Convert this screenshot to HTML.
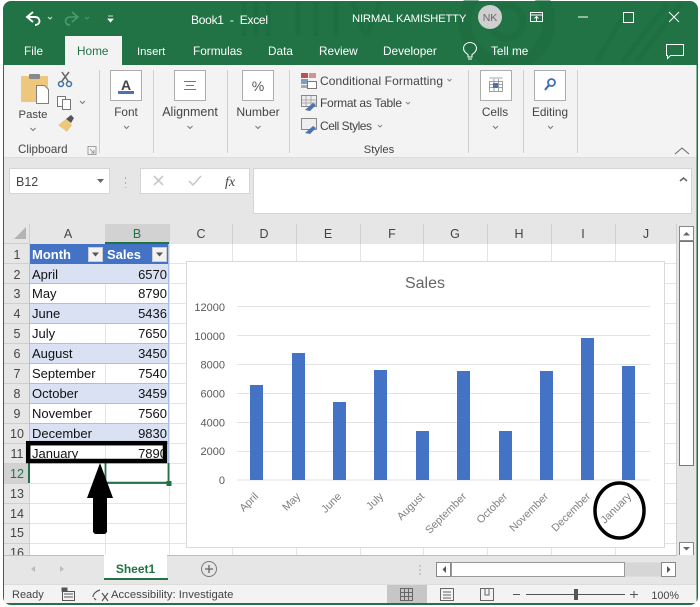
<!DOCTYPE html>
<html><head><meta charset="utf-8"><style>
html,body{margin:0;padding:0;background:#fff;width:700px;height:607px;overflow:hidden}
svg{display:block;font-family:"Liberation Sans",sans-serif}
</style></head><body>
<svg width="700" height="607" viewBox="0 0 700 607" xmlns="http://www.w3.org/2000/svg">
<rect width="700" height="607" fill="#fff"/>
<!-- window -->
<rect x="3" y="1" width="695" height="604" rx="8" fill="#217346"/>
<rect x="4" y="65" width="692.500" height="538" rx="4" fill="#e6e6e6"/>
<!-- title pattern -->
<g fill="none" stroke="#1c6a3e" opacity=".55">
<circle cx="507" cy="22" r="42" stroke-width="13"/>
<circle cx="507" cy="22" r="16" stroke-width="7"/>
<path d="M244 2v34M256 2v34M268 2v34M298 2v34M316 2v34M336 2v34M352 2l14 34M380 2l-14 34M622 62l45-58M636 62l45-58M596 62l30-50" stroke-width="5"/>
</g>
<!-- title bar -->
<g fill="none" stroke="#fff" stroke-width="1.900">
<path d="M33 12l-6 5 6 5M27 17h8c6 0 6 8 0 8"/>
</g>
<path d="M48 17l2 2 2-2" fill="none" stroke="#cfe3d7"/>
<g fill="none" stroke="#4d9a71" stroke-width="1.600"><path d="M72 12l6 5-6 5M78 17h-8c-6 0-6 8 0 8"/></g>
<path d="M85 17l2 2 2-2" fill="none" stroke="#4d9a71"/>
<path d="M108 16h5M108 19h5l-2.500 3z" fill="#fff" stroke="#fff" stroke-width=".8"/>
<text x="191" y="24" font-size="12" fill="#fff" xml:space="preserve" textLength="77">Book1  -  Excel</text>
<text x="352" y="22" font-size="11.300" fill="#fff" letter-spacing="-.2">NIRMAL KAMISHETTY</text>
<circle cx="490" cy="17" r="12" fill="#cfcfcf"/>
<text x="490" y="21" font-size="10.500" fill="#666" text-anchor="middle">NK</text>
<g fill="none" stroke="#fff" stroke-width="1">
<rect x="530.500" y="12.500" width="12" height="9"/><path d="M530.500 15h12M536.500 21v-4M534.500 18.500l2-2 2 2"/>
<path d="M578 17h10"/>
<rect x="623.500" y="12.500" width="10" height="10"/>
<path d="M669 12l10 10M679 12l-10 10"/>
<path d="M666.500 44.500h17v11h-13l-3 3v-3h-1z" stroke-width="1"/>
</g>
<!-- tabs -->
<rect x="65" y="36" width="57" height="30" fill="#f3f3f3"/>
<g font-size="11.800" fill="#fff">
<text x="24" y="55">File</text>
<text x="137" y="55" font-size="11.300">Insert</text>
<text x="193" y="55">Formulas</text>
<text x="268" y="55">Data</text>
<text x="319" y="55">Review</text>
<text x="383" y="55">Developer</text>
<text x="491" y="55">Tell me</text>
</g>
<text x="77" y="55" font-size="11.800" fill="#217346">Home</text>
<g fill="none" stroke="#fff" stroke-width="1"><path d="M468 57v-2.500c-8-5-4-12 2-12s10 7 2 12v2.500zM468 59h4"/></g>
<!-- ribbon -->
<rect x="4" y="65" width="692.500" height="92" fill="#f3f3f3"/>
<rect x="4" y="157" width="692.500" height="1" fill="#dcdcdc"/>
<!-- separators -->
<g stroke="#cfcfcf"><path d="M99.500 70v83M153.500 70v83M227.500 70v83M289.500 70v83M468.500 70v83M523.500 70v83M577.500 70v83"/></g>
<!-- clipboard -->
<rect x="21" y="76" width="27" height="26" rx="1" fill="#eec77f"/>
<rect x="29" y="74" width="11" height="5" rx="1" fill="#8a8a8a"/>
<path d="M36.500 85.500h8l4 4v14h-12z" fill="#fff" stroke="#7f7f7f"/>
<path d="M62 81l7-9M68 81l-6-9" stroke="#666" stroke-width="1.500" fill="none"/>
<g fill="none" stroke="#41719c" stroke-width="1.500"><circle cx="61" cy="84" r="2.500"/><circle cx="69" cy="84" r="2.500"/></g>
<g fill="#fff" stroke="#777"><rect x="57.500" y="96.500" width="8" height="10"/><rect x="62.500" y="99.500" width="8" height="10"/></g>
<path d="M80 101l2.500 2.500 2.500-2.500" fill="none" stroke="#777"/>
<path d="M58 125l8-6 6 6-5 7z" fill="#eec77f"/><path d="M66 119l5-4 3 3-3 5z" fill="#555"/>
<text x="33" y="118" font-size="11.300" fill="#444" text-anchor="middle">Paste</text>
<path d="M30.500 128l2.500 2.500 2.500-2.500" fill="none" stroke="#777"/>
<text x="18" y="153" font-size="11.600" fill="#444">Clipboard</text>
<path d="M88 146.500h8v8h-8zM90 149l4 4M94 150v3h-3" fill="none" stroke="#888" stroke-width=".8"/>
<!-- group buttons -->
<g fill="#fff" stroke="#adadad">
<rect x="110.500" y="70.500" width="31" height="30"/>
<rect x="174.500" y="70.500" width="31" height="30"/>
<rect x="242.500" y="70.500" width="31" height="30"/>
<rect x="480.500" y="70.500" width="31" height="30"/>
<rect x="534.500" y="70.500" width="31" height="30"/>
</g>
<text x="126" y="90" font-size="14" font-weight="bold" fill="#444" text-anchor="middle">A</text>
<rect x="118" y="91" width="16" height="3" fill="#4a74b0"/>
<path d="M184 81.500h12M186 85.500h8M184 89.500h12" stroke="#777" stroke-width="1"/>
<text x="258" y="91" font-size="14" fill="#555" text-anchor="middle">%</text>
<g fill="none" stroke="#888" stroke-width=".8"><rect x="489.500" y="81.500" width="13" height="10"/><path d="M489.500 78h13M489.500 84.500h13M489.500 87.500h13M494 79v12M498.500 79v12"/></g>
<rect x="493" y="83" width="5" height="5" fill="#4a74b0"/>
<circle cx="551.500" cy="82.500" r="3.500" fill="none" stroke="#3f6fb0" stroke-width="1.800"/><path d="M549 85l-4 5" stroke="#3f6fb0" stroke-width="2.200"/>
<g font-size="11.800" fill="#444" text-anchor="middle">
<text x="126" y="116">Font</text>
<text x="190" y="116" font-size="12.500">Alignment</text>
<text x="258" y="116" font-size="12.200">Number</text>
<text x="495" y="116">Cells</text>
<text x="550" y="116">Editing</text>
</g>
<g fill="none" stroke="#777"><path d="M124 126l2.500 2.500 2.500-2.500M187.500 126l2.500 2.500 2.500-2.500M255.500 126l2.500 2.500 2.500-2.500M493 126l2.500 2.500 2.500-2.500M548 126l2.500 2.500 2.500-2.500"/></g>
<!-- styles -->
<g>
<rect x="301" y="73" width="7" height="5" fill="#c0504d"/><rect x="309" y="73" width="7" height="5" fill="#c0504d" opacity=".6"/>
<rect x="301" y="79" width="7" height="5" fill="#7a9cc6"/><rect x="301" y="85" width="7" height="3" fill="#aaa"/>
<rect x="307.500" y="81.500" width="9" height="7" fill="#fff" stroke="#777"/>
<rect x="301.500" y="95.500" width="15" height="11" fill="#eee" stroke="#888"/><path d="M306 96v10M311 96v10M302 100h14M302 103h14" stroke="#aaa"/><path d="M305 110l8-7 3 2-6 6z" fill="#4a74b0"/>
<rect x="301.500" y="118.500" width="15" height="11" fill="#eee" stroke="#888"/><path d="M305 133l8-7 3 2-6 6z" fill="#4a74b0"/>
</g>
<g font-size="12" fill="#444">
<text x="320" y="85" textLength="123">Conditional Formatting</text>
<text x="320" y="107" textLength="82">Format as Table</text>
<text x="320" y="130" textLength="52">Cell Styles</text>
</g>
<g fill="none" stroke="#888"><path d="M447.500 79l2 2 2-2M406 102l2 2 2-2M378 125l2 2 2-2"/></g>
<text x="379" y="153" font-size="11.200" fill="#444" text-anchor="middle">Styles</text>
<path d="M675 154l7-6 7 6" fill="none" stroke="#666"/>
<!-- formula bar -->
<rect x="9.500" y="168.500" width="100" height="25" fill="#fff" stroke="#d4d4d4"/>
<text x="16" y="186" font-size="12.500" fill="#444">B12</text>
<path d="M97 179h7l-3.500 4z" fill="#666"/>
<path d="M125.500 177v2M125.500 182v2M125.500 187v1" stroke="#aaa"/>
<rect x="140.500" y="168.500" width="109" height="25" fill="#fff" stroke="#d4d4d4"/>
<g fill="none" stroke="#c8c8c8" stroke-width="1.600"><path d="M154 176l9 9M163 176l-9 9M189 181l4 4 8-9"/></g>
<text x="225" y="186" font-size="14" font-family="Liberation Serif,serif" font-style="italic" fill="#444">fx</text>
<rect x="253.500" y="168.500" width="438" height="45" fill="#fff" stroke="#d4d4d4"/>
<path d="M680 181l3.500-3 3.500 3" fill="none" stroke="#666" stroke-width="1.500"/>
<!-- grid -->
<rect x="29" y="244" width="647" height="311" fill="#fff"/>
<rect x="4" y="224" width="672" height="20" fill="#e6e6e6"/>
<rect x="4" y="244" width="25" height="311" fill="#e6e6e6"/>
<rect x="105" y="224" width="64" height="19" fill="#d2d2d2"/>
<rect x="4" y="463" width="25" height="20" fill="#d2d2d2"/>
<path d="M26 227v12h-12z" fill="#b4b4b4"/>
<g stroke="#e4e4e4" fill="none">
<path d="M29 283.500h647M29 303.500h647M29 323.500h647M29 343.500h647M29 363.500h647M29 383.500h647M29 403.500h647M29 423.500h647M29 443.500h647M29 463.500h647M29 483.500h647M29 503.500h647M29 523.500h647M29 543.500h647M29 263.500h647"/>
<path d="M105.500 244v311M169.500 244v311M232.500 244v311M296.500 244v311M360.500 244v311M423.500 244v311M487.500 244v311M551.500 244v311M615.500 244v311"/>
</g>
<g stroke="#cfcfcf"><path d="M29.500 224v331M169.500 224v20M232.500 224v20M296.500 224v20M360.500 224v20M423.500 224v20M487.500 224v20M551.500 224v20M615.500 224v20M4 243.500h25M4 263.500h25M4 283.500h25M4 303.500h25M4 323.500h25M4 343.500h25M4 363.500h25M4 383.500h25M4 403.500h25M4 423.500h25M4 443.500h25M4 463.500h25M4 483.500h25M4 503.500h25M4 523.500h25M4 543.500h25M676.500 224v331"/></g>
<rect x="105" y="242" width="64" height="2" fill="#217346"/>
<rect x="28" y="463" width="2" height="20" fill="#217346"/>
<!-- headers -->
<g font-size="12.500" fill="#444" text-anchor="middle">
<text x="68" y="238">A</text><text x="137" y="238" fill="#217346">B</text><text x="201" y="238">C</text><text x="264" y="238">D</text><text x="328" y="238">E</text><text x="392" y="238">F</text><text x="455" y="238">G</text><text x="519" y="238">H</text><text x="583" y="238">I</text><text x="646" y="238">J</text>
<text x="17" y="259">1</text><text x="17" y="279">2</text><text x="17" y="298">3</text><text x="17" y="318">4</text><text x="17" y="338">5</text><text x="17" y="358">6</text><text x="17" y="378">7</text><text x="17" y="398">8</text><text x="17" y="418">9</text><text x="17" y="438">10</text><text x="17" y="458">11</text><text x="17" y="478" fill="#217346">12</text><text x="17" y="498">13</text><text x="17" y="518">14</text><text x="17" y="537">15</text><text x="17" y="557">16</text>
</g>
<!-- table -->
<rect x="30" y="244" width="139" height="20" fill="#4472c4"/>
<rect x="30" y="264" width="139" height="20" fill="#d9e1f2"/>
<rect x="30" y="304" width="139" height="20" fill="#d9e1f2"/>
<rect x="30" y="344" width="139" height="19" fill="#d9e1f2"/>
<rect x="30" y="383" width="139" height="20" fill="#d9e1f2"/>
<rect x="30" y="423" width="139" height="20" fill="#d9e1f2"/>
<g stroke="#a9bfe6"><path d="M29.500 264v199M168.500 244v219M30 283.500h139M30 303.500h139M30 323.500h139M30 343.500h139M30 363.500h139M30 383.500h139M30 403.500h139M30 423.500h139M30 443.500h139"/></g>
<rect x="88.500" y="247.500" width="14" height="14" fill="#f2f2f2" stroke="#ccc"/><path d="M92 252.500h7l-3.500 4z" fill="#555"/>
<rect x="152.500" y="247.500" width="14" height="14" fill="#f2f2f2" stroke="#ccc"/><path d="M156 252.500h7l-3.500 4z" fill="#555"/>
<text x="32" y="259" font-size="13" font-weight="bold" fill="#fff">Month</text>
<text x="107" y="259" font-size="13" font-weight="bold" fill="#fff">Sales</text>
<g font-size="13" fill="#111">
<text x="32" y="279">April</text><text x="32" y="298">May</text><text x="32" y="318">June</text><text x="32" y="338">July</text><text x="32" y="358">August</text><text x="32" y="378">September</text><text x="32" y="398">October</text><text x="32" y="418">November</text><text x="32" y="438">December</text><text x="32" y="458">January</text>
</g>
<g font-size="13" fill="#111" text-anchor="end">
<text x="167" y="279">6570</text><text x="167" y="298">8790</text><text x="167" y="318">5436</text><text x="167" y="338">7650</text><text x="167" y="358">3450</text><text x="167" y="378">7540</text><text x="167" y="398">3459</text><text x="167" y="418">7560</text><text x="167" y="438">9830</text><text x="167" y="458">7890</text>
</g>
<!-- selection -->
<path d="M105.500 463v20h63v-20" fill="none" stroke="#217346" stroke-width="1.800"/>
<path d="M105 482.500h64" stroke="#217346" stroke-width="1.500"/>
<rect x="166.500" y="481" width="5" height="5" fill="#217346"/>
<!-- annotation -->
<rect x="28.200" y="443.200" width="136.800" height="17.800" fill="none" stroke="#000" stroke-width="4.500"/>
<path d="M100 463l13 35h-6v34l-2 2h-10l-2-2v-34h-6z" fill="#000"/>
<!-- chart -->
<rect x="186.500" y="261.500" width="478" height="286" fill="#fff" stroke="#d9d9d9"/>
<text x="425" y="288" font-size="16" fill="#666" text-anchor="middle">Sales</text>
<g stroke="#e2e2e2"><path d="M237 306.500h413M237 335.500h413M237 364.500h413M237 393.500h413M237 422.500h413M237 451.500h413M237 480h413"/></g>
<g font-size="11" fill="#595959" text-anchor="end">
<text x="225" y="311">12000</text><text x="225" y="340">10000</text><text x="225" y="368.500">8000</text><text x="225" y="397.500">6000</text><text x="225" y="426.500">4000</text><text x="225" y="455">2000</text><text x="225" y="484">0</text>
</g>
<g fill="#4472c4">
<rect x="250" y="385" width="13" height="95"/>
<rect x="292" y="353" width="13" height="127"/>
<rect x="333" y="402" width="13" height="78"/>
<rect x="374" y="370" width="13" height="110"/>
<rect x="416" y="431" width="13" height="49"/>
<rect x="457" y="371" width="13" height="109"/>
<rect x="499" y="431" width="13" height="49"/>
<rect x="540" y="371" width="13" height="109"/>
<rect x="581" y="338" width="13" height="142"/>
<rect x="622" y="366" width="13" height="114"/>
</g>
<g font-size="10.800" fill="#7f7f7f" text-anchor="end">
<text transform="translate(259,497) rotate(-45)">April</text>
<text transform="translate(301,497) rotate(-45)">May</text>
<text transform="translate(342,497) rotate(-45)">June</text>
<text transform="translate(384,497) rotate(-45)">July</text>
<text transform="translate(425,497) rotate(-45)">August</text>
<text transform="translate(467,497) rotate(-45)">September</text>
<text transform="translate(508,497) rotate(-45)">October</text>
<text transform="translate(549,497) rotate(-45)">November</text>
<text transform="translate(591,497) rotate(-45)">December</text>
<text transform="translate(632,497) rotate(-45)">January</text>
</g>
<ellipse cx="619.500" cy="510.500" rx="24.500" ry="27.500" fill="none" stroke="#000" stroke-width="3.500"/>
<!-- vscroll -->
<rect x="677" y="224" width="19.500" height="332" fill="#e6e6e6"/>
<rect x="679.500" y="226.500" width="14" height="14" fill="#fff" stroke="#888"/>
<path d="M683 235.500l3.500-3.500 3.500 3.500z" fill="#666"/>
<rect x="679.500" y="241.500" width="14" height="224" fill="#fff" stroke="#777"/>
<rect x="679.500" y="542.500" width="14" height="13" fill="#fff" stroke="#888"/>
<path d="M683 547h7l-3.500 3.500z" fill="#666"/>
<!-- sheet tabs bar -->
<rect x="4" y="555" width="692.500" height="29" fill="#e6e6e6"/>
<rect x="4" y="555" width="673" height="1" fill="#bdbdbd"/>
<rect x="104" y="555" width="63" height="24" fill="#fff"/>
<rect x="104" y="578" width="64" height="2" fill="#217346"/>
<text x="135.500" y="573" font-size="12" font-weight="bold" fill="#217346" text-anchor="middle">Sheet1</text>
<path d="M35 566l-4 3 4 3z" fill="#bcbcbc"/><path d="M60 566l4 3-4 3z" fill="#bcbcbc"/>
<circle cx="209" cy="569" r="7.500" fill="none" stroke="#777"/>
<path d="M205 569h8M209 565v8" stroke="#666" stroke-width="1.300"/>
<path d="M420 565v2M420 569v2M420 573v2" stroke="#aaa"/>
<rect x="436.500" y="562.500" width="239" height="14" fill="#d6d6d6" stroke="none"/>
<rect x="436.500" y="562.500" width="14" height="14" fill="#fff" stroke="#888"/>
<path d="M446 566v7l-3.500-3.500z" fill="#555"/>
<rect x="451.500" y="562.500" width="173" height="14" fill="#fff" stroke="#999"/>
<rect x="661.500" y="562.500" width="14" height="14" fill="#fff" stroke="#888"/>
<path d="M667 566v7l3.500-3.500z" fill="#555"/>
<!-- status -->
<rect x="4" y="584" width="692.500" height="19" fill="#f3f3f3"/>
<rect x="4" y="584" width="692.500" height="1" fill="#dcdcdc"/>
<rect x="387" y="585" width="40" height="18" fill="#c6c6c6"/>
<text x="12" y="598" font-size="11" fill="#444">Ready</text>
<g fill="none" stroke="#555"><rect x="62.500" y="591.500" width="12" height="9"/><path d="M64 594h9M64 597h9"/><rect x="62" y="588" width="5" height="3" fill="#555"/></g>
<g fill="none" stroke="#555" stroke-width="1.200"><path d="M100 590c-4 1-7 4-7 7M96 600l-2-2M102 593l6 8M108 593l-6 8"/></g>
<text x="111" y="598" font-size="11.300" fill="#444">Accessibility: Investigate</text>
<g fill="none" stroke="#666"><rect x="400.500" y="588.500" width="12" height="12"/><path d="M404.500 589v11M408.500 589v11M401 592.500h11M401 596.500h11"/>
<rect x="440.500" y="588.500" width="13" height="12"/><path d="M443 592h8M443 595h8M443 598h8"/>
<rect x="480.500" y="588.500" width="13" height="12"/><path d="M485 589v6h4v-6"/></g>
<path d="M513 594.500h7M526 594.500h99M630 594.500h8M634 591v7" stroke="#555"/>
<rect x="574" y="589" width="4" height="11" fill="#555"/>
<text x="679" y="599" font-size="10.800" fill="#444" text-anchor="end">100%</text>
</svg>
</body></html>
